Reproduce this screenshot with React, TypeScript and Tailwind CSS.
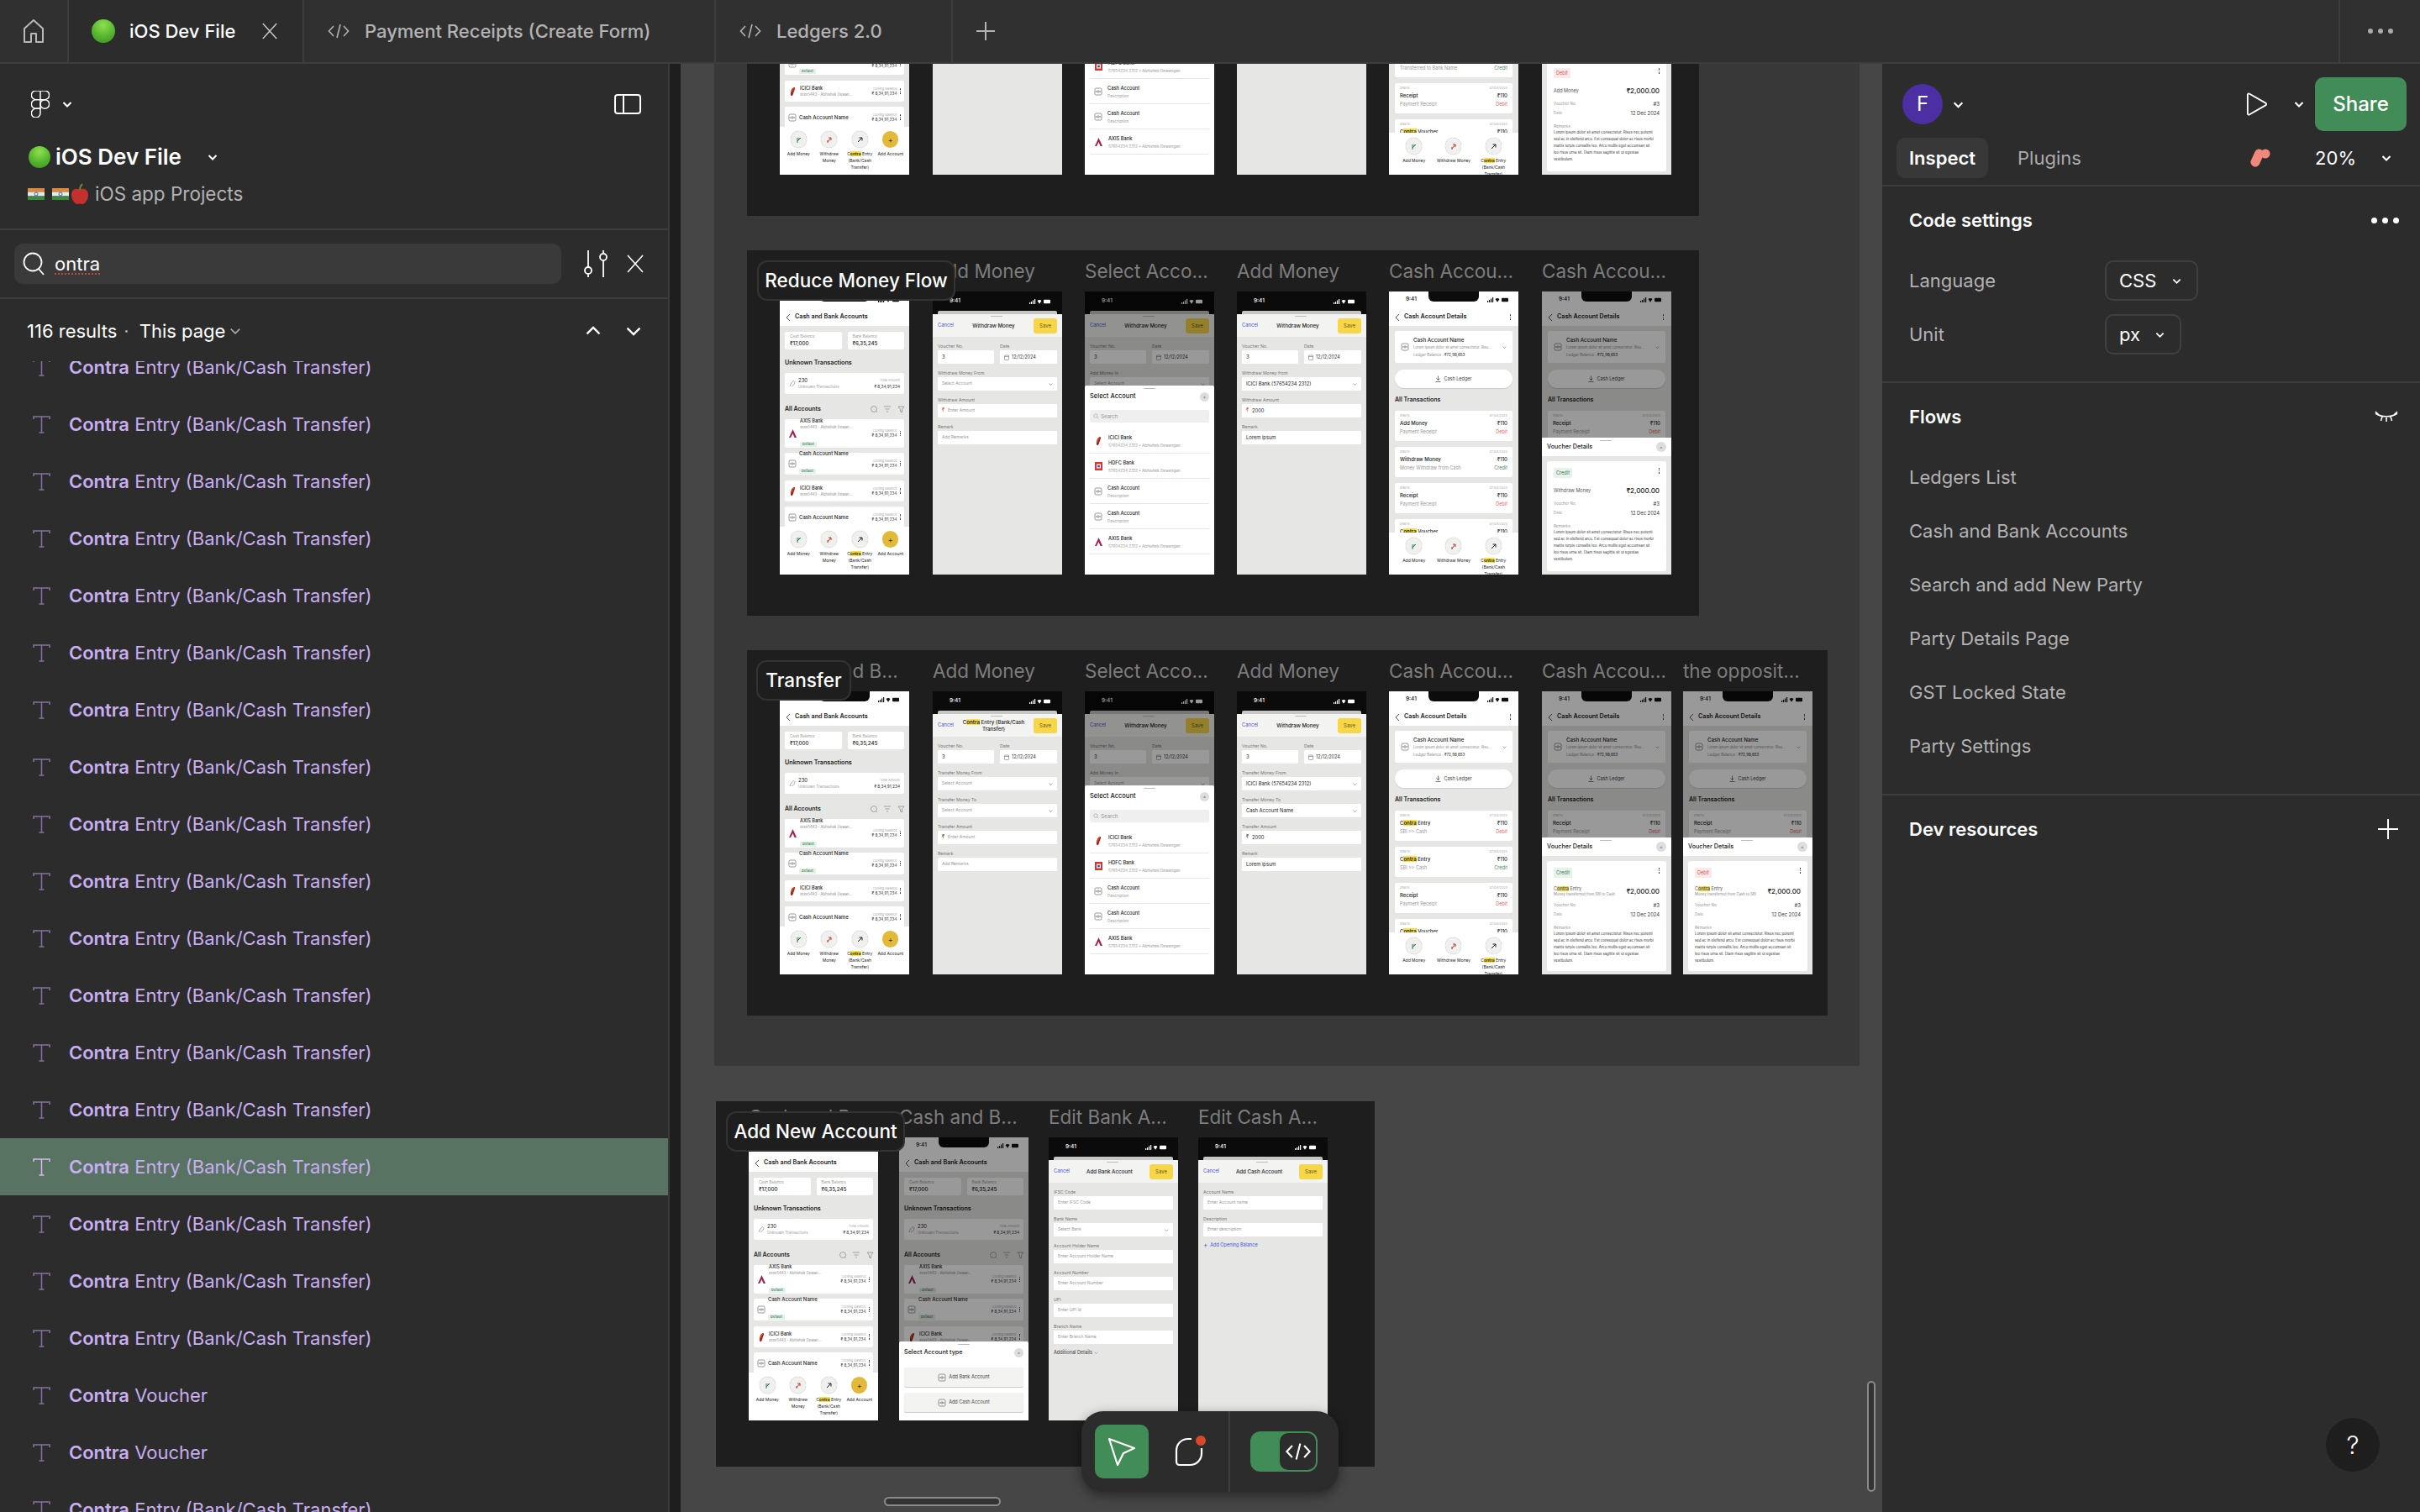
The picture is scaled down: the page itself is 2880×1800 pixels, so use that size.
import React from "react";

const Hi = () => (
  <>
    <span>C</span>
    <span className="bg-[#f9e04b] font-semibold">ontra</span>
  </>
);

const Chev = ({ c = "#fff", s = 12, up = false, w = 2 }: { c?: string; s?: number; up?: boolean; w?: number }) => (
  <svg width={s} height={s} viewBox="0 0 12 12" fill="none" stroke={c} strokeWidth={w} className="shrink-0">
    <path d={up ? "M1.5 8 6 3.5 10.5 8" : "M1.5 4 6 8.5 10.5 4"} />
  </svg>
);

const XIcon = ({ s = 22, c = "#fff" }: { s?: number; c?: string }) => (
  <svg width={s} height={s} viewBox="0 0 22 22" stroke={c} strokeWidth={1.6} fill="none" className="shrink-0">
    <path d="M2 1 20 21M20 1 2 21" />
  </svg>
);

const CodeIcon = ({ c = "#b3b3b3", w = 26, h = 22, sw = 1.6 }: { c?: string; w?: number; h?: number; sw?: number }) => (
  <svg width={w} height={h} viewBox="0 0 26 22" fill="none" stroke={c} strokeWidth={sw} className="shrink-0">
    <path d="M7 5 1.5 11 7 17M19 5l5.5 6-5.5 6M15 3l-4 16" />
  </svg>
);

const GreenDot = ({ className }: { className: string }) => (
  <span className={`inline-block shrink-0 rounded-full bg-[radial-gradient(circle_at_50%_25%,#8ee04e,#55b52f_55%,#3c8f21)] ${className}`} />
);

const Flag = () => (
  <svg width="20" height="16" viewBox="0 0 20 16" className="shrink-0">
    <path d="M0 1h20v4.5H0z" fill="#d98a3d" />
    <path d="M0 5.5h20v5H0z" fill="#e9e9e9" />
    <path d="M0 10.500h20V15H0z" fill="#3d8a45" />
    <circle cx="10" cy="8" r="2" fill="none" stroke="#33468f" strokeWidth="0.8" />
  </svg>
);

/* ---------- miniature phone pieces ---------- */

const Status = ({ light = false }: { light?: boolean }) => {
  const c = light ? "#ffffff" : "#111111";
  return (
    <div className={`flex h-[20px] items-center justify-between pl-[20px] ${light ? "pr-[14px] pt-[3px]" : "pr-[12px]"}`}>
      <span className={`text-[6.500px] font-medium ${light ? "text-white" : "text-[#111]"}`}>9:41</span>
      <svg width="25" height="6" viewBox="0 0 25 6" fill={c}>
        <path d="M0 4h1.200v2H0zM2 3h1.200v3H2zM4 1.500h1.200V6H4zM6 0h1.200v6H6z" />
        <path d="M9.500 2 12 5.800 14.500 2a4 4 0 0 0-5 0z" />
        <rect x="17" y="0.800" width="8" height="4.500" rx="1" />
      </svg>
    </div>
  );
};

const Header = ({ title, menu = false }: { title: string; menu?: boolean }) => (
  <div className="relative h-[41px] shrink-0 bg-white">
    <div className="absolute left-[47px] top-0 h-[12px] w-[60px] rounded-b-[6px] bg-[#0c0c0c]" />
    <Status />
    <div className="flex h-[21px] items-center pl-[7px] pr-[9px]">
      <svg width="6" height="10" viewBox="0 0 6 10" fill="none" stroke="#222" strokeWidth="0.8">
        <path d="M5 1 1 5l4 4" />
      </svg>
      <span className="ml-[5px] flex-1 whitespace-nowrap text-[7.200px] font-semibold text-[#1a1a1a]">{title}</span>
      {menu && <Dots />}
    </div>
  </div>
);

const Dots = () => (
  <span className="flex shrink-0 flex-col gap-[1px]">
    <i className="block h-[1.500px] w-[1.500px] rounded-full bg-[#222]" />
    <i className="block h-[1.500px] w-[1.500px] rounded-full bg-[#222]" />
    <i className="block h-[1.500px] w-[1.500px] rounded-full bg-[#222]" />
  </span>
);

const Logo = ({ kind }: { kind: string }) => {
  if (kind === "axis")
    return (
      <svg width="11" height="12" viewBox="0 0 11 12" className="shrink-0">
        <path d="M5.500 1 10 11H7.500L5.500 6 3 11H1z" fill="#a3214f" />
      </svg>
    );
  if (kind === "icici")
    return (
      <svg width="11" height="12" viewBox="0 0 11 12" className="shrink-0">
        <path d="M7 1C4 2 2.500 6 3 10c.300 1.500 2 1.500 2.500 0L8 2.500C8.300 1.500 7.800.800 7 1z" fill="#a8201a" />
        <path d="M7.500 1.500c-1.500.500-3 3-3.500 6" fill="none" stroke="#e97a26" strokeWidth="0.8" />
      </svg>
    );
  if (kind === "hdfc")
    return (
      <svg width="11" height="12" viewBox="0 0 11 12" className="shrink-0">
        <rect x="1" y="1" width="9" height="10" fill="#e03131" />
        <rect x="3" y="3.500" width="5" height="5" fill="#fff" />
        <rect x="4.300" y="4.800" width="2.500" height="2.500" fill="#1c4fa0" />
      </svg>
    );
  return (
    <svg width="10" height="10" viewBox="0 0 10 10" fill="none" stroke="#555" strokeWidth="0.6" className="shrink-0">
      <rect x="1" y="1" width="8" height="8" rx="1.500" />
      <circle cx="5" cy="5" r="1.200" />
      <path d="M2.800 4v2M7.200 4v2" />
    </svg>
  );
};

const Badge = () => (
  <span className="mt-[1px] inline-block rounded-[1px] bg-[#e4f1e7] px-[3px] text-[4px] font-medium leading-[6px] text-[#39815a]">Default</span>
);

const Account = ({ name, sub, logo, badge, h, mt, bold = false }: { name: string; sub?: string; logo: string; badge?: boolean; h: string; mt: string; bold?: boolean }) => (
  <div className={`flex items-center rounded-[2px] bg-white pl-[4px] pr-[4px] ${h} ${mt}`}>
    <Logo kind={logo} />
    <div className="ml-[3px] min-w-0 flex-1">
      <div className={`whitespace-nowrap font-medium leading-[8px] text-[#222] ${bold ? "text-[5.500px]" : "text-[6px]"}`}>{name}</div>
      {sub && <div className="truncate text-[4.300px] leading-[7px] text-[#8a8a8a]">{sub}</div>}
      {badge && <Badge />}
    </div>
    <div className="mr-[3px] shrink-0 text-right">
      <div className="text-[3.800px] leading-[5px] text-[#aaa]">Closing Balance</div>
      <div className="text-[4.700px] leading-[7px] text-[#333]">₹ 8,34,91,234</div>
    </div>
    <Dots />
  </div>
);

const SmallArrow = ({ c, d }: { c: string; d: string }) => (
  <svg width="9" height="9" viewBox="0 0 9 9" fill="none" stroke={c} strokeWidth="1">
    <path d={d} />
  </svg>
);

const Circle = ({ kind }: { kind: string }) => {
  if (kind === "plus")
    return (
      <span className="flex h-[20px] w-[19px] items-center justify-center rounded-full bg-[#e3b93a] text-[9px] leading-none text-[#333]">+</span>
    );
  return (
    <span className="flex h-[20px] w-[19px] items-center justify-center rounded-full bg-[#f0f0ee] shadow-[0_0_1px_#999]">
      {kind === "add" && <SmallArrow c="#2f7d4f" d="M7 2 3 6M2 3h4v0M3 8V4" />}
      {kind === "wd" && <SmallArrow c="#c0392b" d="M3 7l4-5M4 2h3v3M3 5v3" />}
      {kind === "tr" && <SmallArrow c="#222" d="M2 7l5-5M3.500 2H7v3.500" />}
    </span>
  );
};

const Action = ({ kind, children }: { kind: string; children: React.ReactNode }) => (
  <div className="flex flex-col items-center">
    <Circle kind={kind} />
    <div className="mt-[3px] whitespace-pre-line text-center text-[5px] leading-[8px] text-[#222]">{children}</div>
  </div>
);

const Accounts = ({ dim = false }: { dim?: boolean }) => (
  <div className="relative flex h-full flex-col bg-[#e6e6e4]">
    <Header title="Cash and Bank Accounts" />
    <div className="flex-1 overflow-hidden px-[6px] pt-[7px]">
      <div className="flex gap-[7px]">
        {[
          ["Cash Balance", "₹17,000"],
          ["Bank Balance", "₹6,35,245"],
        ].map(([a, b]) => (
          <div key={a} className="h-[21px] flex-1 rounded-[2px] bg-white px-[6px] pt-[3px]">
            <div className="text-[4.600px] leading-[6px] text-[#999]">{a}</div>
            <div className="text-[6.200px] font-medium leading-[9px] text-[#222]">{b}</div>
          </div>
        ))}
      </div>
      <div className="mt-[12px] text-[7.200px] font-semibold leading-[8px] text-[#222]">Unknown Transactions</div>
      <div className="mt-[8px] flex h-[25px] items-center rounded-[2px] bg-white px-[5px]">
        <svg width="8" height="9" viewBox="0 0 8 9" fill="none" stroke="#777" strokeWidth="0.6">
          <path d="M6 1C3 3 2 5 1 8M7 2c0 3-2 5-4 6" />
        </svg>
        <div className="ml-[3px] flex-1">
          <div className="text-[6px] leading-[8px] text-[#222]">230</div>
          <div className="text-[4.500px] leading-[7px] text-[#999]">Unknown Transactions</div>
        </div>
        <div className="text-right">
          <div className="text-[3.800px] leading-[6px] text-[#aaa]">Total Amount</div>
          <div className="text-[4.800px] leading-[8px] text-[#333]">₹ 8,34,91,234</div>
        </div>
      </div>
      <div className="mt-[13px] flex h-[10px] items-center">
        <span className="flex-1 text-[7px] font-semibold text-[#222]">All Accounts</span>
        <svg width="48" height="10" viewBox="0 0 48 10" fill="none" stroke="#777" strokeWidth="0.6" className="mr-[-3px]">
          <circle cx="9" cy="5" r="3.500" />
          <path d="M11.500 7.500 13 9M21 2h8M22.500 5h5M24 8h2M38 2h7l-2.500 3.500V9L40.500 8V5.500z" />
        </svg>
      </div>
      <Account name="AXIS Bank" sub="xxxx5443 - Abhishek Dewan..." logo="axis" badge bold h="h-[34px]" mt="mt-[7px]" />
      <Account name="Cash Account Name" logo="cash" badge h="h-[26px]" mt="mt-[6px]" />
      <Account name="ICICI Bank" sub="xxxx5443 - Abhishek Dewan..." logo="icici" bold h="h-[25px]" mt="mt-[7px]" />
      <Account name="Cash Account Name" logo="cash" h="h-[25px]" mt="mt-[6px]" />
    </div>
    <div className="grid h-[57px] shrink-0 grid-cols-4 bg-white px-[4px] pt-[5px]">
      <Action kind="add">Add Money</Action>
      <Action kind="wd">{"Withdraw\nMoney"}</Action>
      <Action kind="tr">
        <Hi /> Entry{"\n(Bank/Cash\nTransfer)"}
      </Action>
      <Action kind="plus">Add Account</Action>
    </div>
    {dim && <div className="absolute inset-0 bg-black/40" />}
  </div>
);

type Field = { label: string; value: string; filled?: boolean; select?: boolean; icon?: string };

const Input = ({ f }: { f: Field }) => (
  <div className="mb-[6px]">
    <div className="h-[10px] whitespace-nowrap text-[5.200px] leading-[10px] text-[#777]">{f.label}</div>
    <div className="flex h-[16px] items-center rounded-[1.500px] bg-white px-[5px]">
      {f.icon && <span className="mr-[4px] text-[5.500px] leading-none" style={{ color: f.icon }}>₹</span>}
      <span className={`flex-1 whitespace-nowrap ${f.filled ? "text-[5.800px] text-[#222]" : "text-[5px] text-[#999]"}`}>{f.value}</span>
      {f.select && <Chev c="#555" s={5} w={1.200} />}
    </div>
  </div>
);

const Form = ({
  title,
  voucher = true,
  fields,
  footer,
  dim = false,
}: {
  title: React.ReactNode;
  voucher?: boolean;
  fields: Field[];
  footer?: React.ReactNode;
  dim?: boolean;
}) => (
  <div className="relative flex h-full flex-col bg-[#e6e6e4]">
    <div className="relative h-[27px] shrink-0 bg-[#0b0b0b]">
      <Status light />
      <div className="absolute bottom-0 left-[6px] right-[6px] h-[4px] rounded-t-[2px] bg-[#c6c6c4]" />
    </div>
    <div className="relative flex h-[27px] shrink-0 items-center justify-between rounded-t-[2px] bg-[#f3f3f1] pl-[6px] pr-[6px]">
      <div className="absolute left-[69px] top-[2px] h-[1px] w-[14px] rounded bg-[#bbb]" />
      <span className="text-[5.800px] text-[#4a55d4]">Cancel</span>
      <span className="w-[76px] text-center text-[6.200px] font-medium leading-[8px] text-[#222]">{title}</span>
      <span className="flex h-[18px] w-[28px] items-center justify-center rounded-[3px] bg-[#f7d64a] text-[6px] text-[#6b5a10]">Save</span>
    </div>
    <div className="flex-1 overflow-hidden px-[6px] pt-[6px]">
      {voucher && (
        <div className="flex gap-[7px]">
          <div className="w-[67px]">
            <Input f={{ label: "Voucher No.", value: "3", filled: true }} />
          </div>
          <div className="flex-1">
            <div className="mb-[6px]">
              <div className="h-[10px] text-[5.200px] leading-[10px] text-[#777]">Date</div>
              <div className="flex h-[16px] items-center gap-[3px] rounded-[1.500px] bg-white px-[5px] text-[5.500px] text-[#333]">
                <svg width="6" height="7" viewBox="0 0 6 7" fill="none" stroke="#555" strokeWidth="0.5">
                  <rect x="0.500" y="1" width="5" height="5.500" rx="0.800" />
                  <path d="M0.500 2.500h5" />
                </svg>
                12/12/2024
              </div>
            </div>
          </div>
        </div>
      )}
      {fields.map((f) => (
        <Input key={f.label} f={f} />
      ))}
      {footer}
    </div>
    {dim && <div className="absolute inset-0 bg-black/40" />}
  </div>
);

const Sub = "57654234 2312 • Abhishek Dewangan";

const SelectSheet = () => (
  <div className="absolute inset-x-0 bottom-0 top-[112px] rounded-t-[2px] bg-white px-[6px]">
    <div className="mx-auto mt-[3px] h-[1px] w-[14px] rounded bg-[#bbb]" />
    <div className="mt-[4px] flex h-[10px] items-center justify-between">
      <span className="text-[7.500px] font-medium text-[#222]">Select Account</span>
      <span className="flex h-[11px] w-[11px] items-center justify-center rounded-full bg-[#ddd] text-[5px] leading-none text-[#666]">×</span>
    </div>
    <div className="mt-[11px] flex h-[15px] items-center gap-[2px] rounded-[2px] bg-[#efefef] px-[4px] text-[6.200px] text-[#999]">
      <svg width="7" height="7" viewBox="0 0 7 7" fill="none" stroke="#888" strokeWidth="0.5">
        <circle cx="3" cy="3" r="2.200" />
        <path d="M4.700 4.700 6.500 6.500" />
      </svg>
      Search
    </div>
    <div className="mt-[7px]">
      {[
        ["ICICI Bank", Sub, "icici"],
        ["HDFC Bank", Sub, "hdfc"],
        ["Cash Account", "Description", "cash"],
        ["Cash Account", "Description", "cash"],
        ["AXIS Bank", Sub, "axis"],
      ].map(([n, s, l], i) => (
        <div key={i} className="flex h-[30px] items-center gap-[6px] border-b border-[#e6e6e6] pl-[5px]">
          <Logo kind={l} />
          <div>
            <div className="text-[5.700px] font-medium leading-[10px] text-[#222]">{n}</div>
            <div className="whitespace-nowrap text-[4.700px] leading-[8px] text-[#999]">{s}</div>
          </div>
        </div>
      ))}
    </div>
  </div>
);

const TypeSheet = () => (
  <div className="absolute inset-x-0 bottom-0 top-[243px] rounded-t-[2px] bg-white px-[6px]">
    <div className="mx-auto mt-[3px] h-[1px] w-[14px] rounded bg-[#bbb]" />
    <div className="mt-[4px] flex h-[11px] items-center justify-between">
      <span className="text-[7.200px] font-medium text-[#222]">Select Account type</span>
      <span className="flex h-[11px] w-[11px] items-center justify-center rounded-full bg-[#ddd] text-[5px] leading-none text-[#666]">×</span>
    </div>
    {["Add Bank Account", "Add Cash Account"].map((t, i) => (
      <div key={t} className={`flex h-[23px] items-center justify-center gap-[3px] rounded-[2px] bg-[#f3f3f1] shadow-[0_1px_1px_#ccc] text-[5.500px] text-[#444] ${i === 0 ? "mt-[12px]" : "mt-[7px]"}`}>
        <Logo kind="cash" />
        {t}
      </div>
    ))}
  </div>
);

type Tx = { title: React.ReactNode; amt: string; sub: React.ReactNode; tag: string };

const Details = ({ tx, dim = false }: { tx: Tx[]; dim?: boolean }) => (
  <div className="relative flex h-full flex-col bg-[#e6e6e4]">
    <Header title="Cash Account Details" menu />
    <div className="flex-1 overflow-hidden px-[7px] pt-[6px]">
      <div className="flex h-[38px] items-center rounded-[2px] bg-white pl-[7px] pr-[7px]">
        <Logo kind="cash" />
        <div className="ml-[5px] min-w-0 flex-1">
          <div className="text-[6.200px] font-medium leading-[9px] text-[#222]">Cash Account Name</div>
          <div className="truncate text-[4.200px] leading-[9px] text-[#888]">Lorem ipsum dolor sit amet consectetur. Risu...</div>
          <div className="text-[4.500px] leading-[9px] text-[#888]">
            Ledger Balance : <span className="font-medium text-[#444]">₹72,98,653</span>
          </div>
        </div>
        <Chev c="#333" s={5} w={1} />
      </div>
      <div className="mt-[8px] flex h-[22px] items-center justify-center gap-[3px] rounded-full bg-white text-[5.500px] text-[#444] shadow-[0_1px_1px_#ccc]">
        <svg width="7" height="8" viewBox="0 0 7 8" fill="none" stroke="#222" strokeWidth="0.6">
          <path d="M3.500 0.500v5M1.500 3.500l2 2 2-2M0.500 7.500h6" />
        </svg>
        Cash Ledger
      </div>
      <div className="mt-[10px] text-[7px] font-semibold leading-[8px] text-[#222]">All Transactions</div>
      {tx.map((t, i) => (
        <div key={i} className={`h-[36px] rounded-[2px] bg-white px-[6px] pt-[3px] ${i === 0 ? "mt-[9px]" : "mt-[7px]"}`}>
          <div className="flex justify-between text-[3.800px] leading-[6px] text-[#aaa]">
            <span>#9876</span>
            <span>07/04/2024</span>
          </div>
          <div className="flex justify-between text-[6px] font-medium leading-[11px] text-[#222]">
            <span>{t.title}</span>
            <span>{t.amt}</span>
          </div>
          <div className="flex justify-between text-[5.500px] leading-[10px] text-[#999]">
            <span>{t.sub}</span>
            <span className={t.tag === "Debit" ? "text-[#e06a6a]" : "text-[#4f8a68]"}>{t.tag}</span>
          </div>
        </div>
      ))}
    </div>
    <div className="grid h-[50px] shrink-0 grid-cols-3 bg-white px-[6px] pt-[6px]">
      <Action kind="add">Add Money</Action>
      <Action kind="wd">Withdraw Money</Action>
      <Action kind="tr">
        <Hi /> Entry{"\n(Bank/Cash Transfer)"}
      </Action>
    </div>
    {dim && <div className="absolute inset-0 bg-black/40" />}
  </div>
);

const lorem = "Lorem ipsum dolor sit amet consectetur. Risus nec potenti\nsed ac in eleifend arcu. Est consequat dolor ac risus morbi\nmattis turpis convallis leo. Arcu mollis eget accumsan sit\nleo risus urna sit. Diam risus sagittis sit ut egestas\nvestibulum.";

const VoucherSheet = ({ tag, title, note }: { tag: string; title: React.ReactNode; note?: string }) => (
  <div className="absolute inset-x-0 bottom-0 top-[174px] flex flex-col bg-[#e6e6e4]">
    <div className="relative flex h-[22px] shrink-0 items-center justify-between rounded-t-[2px] bg-white px-[6px]">
      <div className="absolute left-[69px] top-[3px] h-[1px] w-[14px] rounded bg-[#bbb]" />
      <span className="text-[7.200px] font-medium text-[#222]">Voucher Details</span>
      <span className="flex h-[12px] w-[12px] items-center justify-center rounded-full bg-[#ddd] text-[5px] leading-none text-[#666]">×</span>
    </div>
    <div className="mx-[6px] mt-[6px] h-[131px] rounded-[2px] bg-white px-[8px] pt-[8px]">
      <div className="flex items-start justify-between">
        <span className={`rounded-[1px] px-[3px] text-[5.600px] leading-[12px] ${tag === "Debit" ? "bg-[#fbe9e9] text-[#d9534f]" : "bg-[#e6f2ea] text-[#3f7d5c]"}`}>{tag}</span>
        <Dots />
      </div>
      <div className="mt-[9px] flex items-center justify-between">
        <div>
          <div className="text-[5.500px] leading-[8px] text-[#555]">{title}</div>
          {note && <div className="whitespace-nowrap text-[4.300px] leading-[6px] text-[#888]">{note}</div>}
        </div>
        <span className="text-[8px] font-medium text-[#222]">₹2,000.00</span>
      </div>
      <div className="mt-[4px] flex items-center justify-between text-[4.600px] leading-[11px] text-[#999]">
        <span>Voucher No.</span>
        <span className="text-[6px] text-[#333]">#3</span>
      </div>
      <div className="flex items-center justify-between text-[4.600px] leading-[11px] text-[#999]">
        <span>Date</span>
        <span className="text-[5.800px] text-[#333]">12 Dec 2024</span>
      </div>
      <div className="mt-[6px] text-[4.800px] leading-[8px] text-[#999]">Remarks</div>
      <div className="whitespace-pre-line text-[4.300px] leading-[8px] text-[#333]">{lorem}</div>
    </div>
  </div>
);

/* ---------- data for the canvas ---------- */

const wdEmpty: Field[] = [
  { label: "Withdraw Money From", value: "Select Account", select: true },
  { label: "Withdraw Amount", value: "Enter Amount", icon: "#c0392b" },
  { label: "Remark", value: "Add Remarks" },
];
const wdFull: Field[] = [
  { label: "Withdraw Money from", value: "ICICI Bank (57654234 2312)", select: true, filled: true },
  { label: "Withdraw Amount", value: "2000", icon: "#c0392b", filled: true },
  { label: "Remark", value: "Lorem ipsum", filled: true },
];
const trEmpty: Field[] = [
  { label: "Transfer Money From", value: "Select Account", select: true },
  { label: "Transfer Money To", value: "Select Account", select: true },
  { label: "Transfer Amount", value: "Enter Amount", icon: "#333" },
  { label: "Remark", value: "Add Remarks" },
];
const trFull: Field[] = [
  { label: "Transfer Money From", value: "ICICI Bank (57654234 2312)", select: true, filled: true },
  { label: "Transfer Money To", value: "Cash Account Name", select: true, filled: true },
  { label: "Transfer Amount", value: "2000", icon: "#333", filled: true },
  { label: "Remark", value: "Lorem ipsum", filled: true },
];
const addIn: Field[] = [{ label: "Add Money In", value: "Select Account", select: true }];

const bankFields: Field[] = [
  { label: "IFSC Code", value: "Enter IFSC Code" },
  { label: "Bank Name", value: "Select Bank", select: true },
  { label: "Account Holder Name", value: "Enter Account Holder Name" },
  { label: "Account Number", value: "Enter Account Number" },
  { label: "UPI", value: "Enter UPI Id" },
  { label: "Branch Name", value: "Enter Branch Name" },
];
const cashFields: Field[] = [
  { label: "Account Name", value: "Enter Account name" },
  { label: "Description", value: "Enter description" },
];

const receipt: Tx = { title: "Receipt", amt: "₹110", sub: "Payment Receipt", tag: "Debit" };
const voucherTx: Tx = { title: <><Hi /> Voucher</>, amt: "₹110", sub: "Money", tag: "Debit" };
const txReduce: Tx[] = [
  { title: "Add Money", amt: "₹110", sub: "Payment Receipt", tag: "Debit" },
  { title: "Withdraw Money", amt: "₹110", sub: "Money Withdraw from Cash", tag: "Credit" },
  receipt,
  voucherTx,
];
const sbi = <>SBI &gt;&gt; Cash</>;
const txTransfer: Tx[] = [
  { title: <><Hi /> Entry</>, amt: "₹110", sub: sbi, tag: "Debit" },
  { title: <><Hi /> Entry</>, amt: "₹110", sub: sbi, tag: "Credit" },
  receipt,
  voucherTx,
];
const txTop: Tx[] = [
  { title: "Add Money", amt: "₹110", sub: "Payment Receipt", tag: "Debit" },
  { title: <><Hi /> Entry</>, amt: "₹110", sub: "Transferred to Bank Name", tag: "Credit" },
  receipt,
  voucherTx,
];
const allReceipts: Tx[] = [receipt, receipt, receipt, voucherTx];

const wdTitle = "Withdraw Money";
const contraTitle = (
  <>
    <Hi /> Entry (Bank/Cash Transfer)
  </>
);

const xs = [928, 1110, 1291, 1472, 1653, 1835];

type Item = { x: number; title: string; el: React.ReactNode };
type Row = { y: number; items: Item[] };

const rows: Row[] = [
  {
    y: -129,
    items: [
      { x: xs[0], title: "", el: <Accounts /> },
      { x: xs[1], title: "", el: <Form title="Add Money" fields={[]} /> },
      { x: xs[2], title: "", el: <div className="relative h-full bg-white"><SelectSheet /></div> },
      { x: xs[3], title: "", el: <Form title="Add Money" fields={[]} /> },
      { x: xs[4], title: "", el: <Details tx={txTop} /> },
      { x: xs[5], title: "", el: <div className="relative h-full bg-[#e6e6e4]"><VoucherSheet tag="Debit" title="Add Money" /></div> },
    ],
  },
  {
    y: 347,
    items: [
      { x: xs[0], title: "Cash and B...", el: <Accounts /> },
      { x: xs[1], title: "Add Money", el: <Form title={wdTitle} fields={wdEmpty} /> },
      {
        x: xs[2],
        title: "Select Acco...",
        el: (
          <div className="relative h-full">
            <Form title={wdTitle} fields={addIn} dim />
            <SelectSheet />
          </div>
        ),
      },
      { x: xs[3], title: "Add Money", el: <Form title={wdTitle} fields={wdFull} /> },
      { x: xs[4], title: "Cash Accou...", el: <Details tx={txReduce} /> },
      {
        x: xs[5],
        title: "Cash Accou...",
        el: (
          <div className="relative h-full">
            <Details tx={allReceipts} dim />
            <VoucherSheet tag="Credit" title="Withdraw Money" />
          </div>
        ),
      },
    ],
  },
  {
    y: 823,
    items: [
      { x: xs[0], title: "Cash and B...", el: <Accounts /> },
      { x: xs[1], title: "Add Money", el: <Form title={contraTitle} fields={trEmpty} /> },
      {
        x: xs[2],
        title: "Select Acco...",
        el: (
          <div className="relative h-full">
            <Form title={wdTitle} fields={addIn} dim />
            <SelectSheet />
          </div>
        ),
      },
      { x: xs[3], title: "Add Money", el: <Form title={wdTitle} fields={trFull} /> },
      { x: xs[4], title: "Cash Accou...", el: <Details tx={txTransfer} /> },
      {
        x: xs[5],
        title: "Cash Accou...",
        el: (
          <div className="relative h-full">
            <Details tx={allReceipts} dim />
            <VoucherSheet tag="Credit" title={<><Hi /> Entry</>} note="Money transferred from SBI to Cash" />
          </div>
        ),
      },
      {
        x: 2003,
        title: "the opposit...",
        el: (
          <div className="relative h-full">
            <Details tx={allReceipts} dim />
            <VoucherSheet tag="Debit" title={<><Hi /> Entry</>} note="Money transferred from Cash to SBI" />
          </div>
        ),
      },
    ],
  },
  {
    y: 1354,
    items: [
      { x: 891, title: "Cash and B...", el: <Accounts /> },
      {
        x: 1070,
        title: "Cash and B...",
        el: (
          <div className="relative h-full">
            <Accounts dim />
            <TypeSheet />
          </div>
        ),
      },
      {
        x: 1248,
        title: "Edit Bank A...",
        el: (
          <Form
            title="Add Bank Account"
            voucher={false}
            fields={bankFields}
            footer={
              <div className="mt-[1px] flex items-center gap-[2px] text-[5.500px] font-medium text-[#555]">
                Additional Details <Chev c="#555" s={5} w={1} />
              </div>
            }
          />
        ),
      },
      {
        x: 1426,
        title: "Edit Cash A...",
        el: (
          <Form
            title="Add Cash Account"
            voucher={false}
            fields={cashFields}
            footer={
              <div className="mt-[3px] flex items-center gap-[3px] text-[5.500px] text-[#4a55d4]">
                <span className="text-[8px] leading-none">+</span> Add Opening Balance
              </div>
            }
          />
        ),
      },
    ],
  },
];

/* canvas origin in page coordinates */
const OX = 810;
const OY = 76;

const tagCls = "absolute flex h-[48px] items-center justify-center rounded-[12px] border-2 border-[#333] bg-[#1e1e1e] text-[22.500px] font-medium text-white";

const Canvas = () => (
  <div className="relative flex-1 overflow-hidden bg-[#464646]">
    <div className="absolute left-[40px] top-0 h-[1193px] w-[1363px] bg-[#383838]" />
    <div className="absolute left-[79px] top-0 h-[181px] w-[1133px] bg-[#1e1e1e]" />
    <div className="absolute left-[79px] top-[222px] h-[435px] w-[1133px] bg-[#1e1e1e]" />
    <div className="absolute left-[79px] top-[698px] h-[435px] w-[1286px] bg-[#1e1e1e]" />
    <div className="absolute left-[42px] top-[1235px] h-[435px] w-[784px] bg-[#1e1e1e]" />
    {rows.map((r) =>
      r.items.map((it, i) => (
        <React.Fragment key={`${r.y}-${i}`}>
          {it.title && (
            <div
              className="absolute whitespace-nowrap text-[22.500px] leading-[28px] text-[#7d7d7d]"
              style={{ left: it.x - OX, top: r.y - OY - 38 }}
            >
              {it.title}
            </div>
          )}
          <div
            className="absolute h-[337px] w-[154px] overflow-hidden bg-white"
            style={{ left: it.x - OX, top: r.y - OY }}
          >
            {it.el}
          </div>
        </React.Fragment>
      ))
    )}
    <div className={`${tagCls} left-[91px] top-[234px] w-[236px]`}>Reduce Money Flow</div>
    <div className={`${tagCls} left-[90px] top-[710px] w-[113px]`}>Transfer</div>
    <div className={`${tagCls} left-[54px] top-[1247px] w-[213px]`}>Add New Account</div>

    {/* floating toolbar */}
    <div className="absolute left-[477px] top-[1604px] flex h-[96px] w-[306px] items-center rounded-[26px] bg-[#2c2c2c] pl-[16px] shadow-[0_4px_14px_rgba(0,0,0,0.45)]">
      <div className="flex h-[64px] w-[64px] items-center justify-center rounded-[10px] bg-[#428d57]">
        <svg width="36" height="36" viewBox="0 0 36 36" fill="none" stroke="#fff" strokeWidth="2.200" strokeLinejoin="round">
          <path d="M3 3 33 14 20 20 13 34Z" />
        </svg>
      </div>
      <div className="relative ml-[31px] h-[36px] w-[34px]">
        <svg width="34" height="36" viewBox="0 0 34 36" fill="none" stroke="#fff" strokeWidth="2.200">
          <path d="M20 3H16C8 3 2 9 2 17V30C2 32 3 34 6 34H18C26 34 32 28 32 20V14" />
        </svg>
        <span className="absolute right-[-3px] top-[-1px] h-[12px] w-[12px] rounded-full bg-[#d8482a]" />
      </div>
      <div className="ml-[30px] h-full w-[2px] bg-[#3f3f3f]" />
      <div className="ml-[24px] flex h-[48px] w-[80px] items-center justify-end rounded-[12px] bg-[#428d57] pr-[2px]">
        <div className="flex h-[44px] w-[43px] items-center justify-center rounded-[10px] bg-[#2c2c2c]">
          <CodeIcon c="#fff" w={32} h={26} sw={1.800} />
        </div>
      </div>
    </div>

    {/* canvas scrollbars */}
    <div className="absolute left-[242px] top-[1706px] h-[11px] w-[139px] rounded-full border-2 border-[#8a8a8a] bg-[#333]" />
    <div className="absolute left-[1412px] top-[1568px] h-[132px] w-[10px] rounded-full border-2 border-[#8a8a8a] bg-[#333]" />
  </div>
);

/* ---------- left panel ---------- */

const TIcon = ({ c }: { c: string }) => (
  <svg width="21" height="21" viewBox="0 0 21 21" fill="none" stroke={c} strokeWidth="1.500" className="shrink-0">
    <path d="M1 4V1h19v3M10.500 1v19M7.500 20h6" />
  </svg>
);

const resultRows = [
  ...Array.from({ length: 18 }, () => "Entry (Bank/Cash Transfer)"),
  "Voucher",
  "Voucher",
  "Entry (Bank/Cash Transfer)",
];

const LeftPanel = () => (
  <div className="flex w-[797px] shrink-0 flex-col border-r-2 border-[#3a3a3a] bg-[#2c2c2c]">
    <div className="flex h-[198px] shrink-0 flex-col border-b-2 border-[#3d3d3d] px-[32px]">
      <div className="flex h-[94px] items-center pl-[5px] pt-[2px]">
        <svg width="22" height="32" viewBox="4 2 16 24" fill="none" stroke="#fff" strokeWidth="1.100">
          <path d="M12 2H8a4 4 0 0 0 0 8h4zM12 2h4a4 4 0 0 1 0 8h-4zM12 10H8a4 4 0 0 0 0 8h4z" />
          <circle cx="16" cy="14" r="4" />
          <path d="M8 18h4v4a4 4 0 1 1-4-4z" />
        </svg>
        <span className="ml-[15px]">
          <Chev s={12} />
        </span>
        <svg width="32" height="24" viewBox="0 0 32 24" fill="none" stroke="#fff" strokeWidth="2" className="ml-auto">
          <rect x="1" y="1" width="30" height="22" rx="3" />
          <path d="M11 1v22" />
        </svg>
      </div>
      <div className="flex h-[34px] items-center">
        <GreenDot className="ml-[2px] h-[26px] w-[26px]" />
        <span className="ml-[6px] text-[26px] font-semibold leading-none text-white">iOS Dev File</span>
        <span className="ml-[31px]">
          <Chev s={12} />
        </span>
      </div>
      <div className="mt-[14px] flex h-[26px] items-center text-[22.500px] text-[#b3b3b3]">
        <span className="ml-[1px]"><Flag /></span>
        <span className="ml-[9px]"><Flag /></span>
        <svg width="22" height="26" viewBox="0 0 22 26" className="ml-[2px] shrink-0">
          <path d="M11 8C7 5 1 7 1 14c0 6 4 11 7 11 1.500 0 2-.800 3-.800s1.500.800 3 .800c3 0 7-5 7-11 0-7-6-9-10-6z" fill="#c4302b" />
          <path d="M11 8c0-3 1-5 3-7" fill="none" stroke="#5a8f3a" strokeWidth="2" />
        </svg>
        <span className="ml-[7px]">iOS app Projects</span>
      </div>
    </div>
    <div className="flex h-[82px] shrink-0 items-center border-b-2 border-[#3d3d3d] pl-[17px]">
      <div className="flex h-[48px] w-[651px] items-center rounded-[10px] bg-[#3a3a3a] pl-[10px]">
        <svg width="26" height="28" viewBox="0 0 26 28" fill="none" stroke="#fff" strokeWidth="1.800">
          <ellipse cx="12" cy="12" rx="10.500" ry="10.500" />
          <path d="M19 20l6 7" />
        </svg>
        <span className="ml-[12px] text-[22px] leading-[26px] text-white underline decoration-[#c8453a] decoration-dotted decoration-2 underline-offset-[3px]">ontra</span>
      </div>
      <svg width="32" height="34" viewBox="0 0 32 34" fill="none" stroke="#fff" strokeWidth="1.800" className="ml-[25px]">
        <path d="M7 1v20M7 29v4M25 1v3M25 13v20" />
        <circle cx="7" cy="25" r="4" />
        <circle cx="25" cy="9" r="4" />
      </svg>
      <span className="ml-[20px]">
        <XIcon />
      </span>
    </div>
    <div className="flex h-[74px] shrink-0 items-center pl-[32px] pr-[31px] pt-[2px] text-[22px] text-white">
      <span>116 results</span>
      <span className="ml-[8px] text-[#aaa]">·</span>
      <span className="ml-[12px]">This page</span>
      <span className="ml-[5px]"><Chev s={14} c="#aaa" w={1.400} /></span>
      <span className="ml-auto"><Chev s={20} up w={1.400} /></span>
      <span className="ml-[28px]"><Chev s={20} w={1.400} /></span>
    </div>
    <div className="min-h-0 flex-1 overflow-hidden">
      <div className="mt-[-27px]">
        {resultRows.map((t, i) => (
          <div key={i} className={`flex h-[68px] items-center pl-[39px] text-[22px] text-[#c8aef2] ${i === 14 ? "bg-[#587361]" : ""}`}>
            <TIcon c={i === 14 ? "#d2b9f5" : "#85709f"} />
            <span className="ml-[22px] whitespace-nowrap">
              <b className="font-semibold">Contra</b> {t}
            </span>
          </div>
        ))}
      </div>
    </div>
  </div>
);

/* ---------- right panel ---------- */

const SmallSelect = ({ label, w }: { label: string; w: string }) => (
  <div className={`flex h-[48px] items-center justify-between rounded-[10px] border-2 border-[#404040] pl-[15px] pr-[18px] text-[22px] text-white ${w}`}>
    {label}
    <Chev s={11} />
  </div>
);

const RightPanel = () => (
  <div className="flex w-[640px] shrink-0 flex-col bg-[#2c2c2c]">
    <div className="flex h-[146px] shrink-0 flex-col border-b-2 border-[#3d3d3d]">
      <div className="flex h-[88px] shrink-0 items-center pl-[24px] pr-[16px] pt-[8px]">
        <span className="flex h-[48px] w-[48px] items-center justify-center rounded-full bg-[#4b2fa3] text-[24px] text-white">F</span>
        <span className="ml-[12px]"><Chev s={13} /></span>
        <svg width="26" height="28" viewBox="0 0 28 30" fill="none" stroke="#fff" strokeWidth="2" strokeLinejoin="round" className="ml-auto mr-[8px]">
          <path d="M2 3C2 1.500 3.500 1 4.500 1.800L25 13.500c1.300.800 1.300 2.200 0 3L4.500 28.200C3.500 29 2 28.500 2 27z" />
        </svg>
        <span className="ml-[23px]"><Chev s={12} /></span>
        <div className="ml-[13px] flex h-[64px] w-[109px] items-center justify-center rounded-[10px] bg-[#428d57] text-[24px] font-medium text-white">Share</div>
      </div>
      <div className="flex flex-1 items-start pl-[17px] pr-[34px]">
        <div className="flex h-[48px] w-[109px] items-center justify-center rounded-[10px] bg-[#383838] text-[22px] font-semibold text-white">Inspect</div>
        <span className="ml-[35px] flex h-[48px] items-center text-[22px] text-[#ababab]">Plugins</span>
        <svg width="28" height="22" viewBox="0 0 28 22" className="ml-auto mr-[3px] mt-[13px]">
          <path d="M8 16 12.500 6" stroke="#f0897c" strokeWidth="11" strokeLinecap="round" fill="none" />
          <circle cx="20" cy="6" r="5.500" fill="#f0897c" />
        </svg>
        <span className="ml-[48px] flex h-[48px] items-center text-[22px] text-white">20%</span>
        <span className="ml-[30px] mt-[18px]"><Chev s={12} /></span>
      </div>
    </div>
    <div className="flex h-[234px] shrink-0 flex-col border-b-2 border-[#3d3d3d] pl-[32px] pr-[25px]">
      <div className="flex h-[80px] shrink-0 items-center justify-between">
        <span className="text-[22px] font-semibold text-white">Code settings</span>
        <span className="flex gap-[6px]">
          <i className="h-[7px] w-[7px] rounded-full bg-white" />
          <i className="h-[7px] w-[7px] rounded-full bg-white" />
          <i className="h-[7px] w-[7px] rounded-full bg-white" />
        </span>
      </div>
      <div className="mt-[8px] flex h-[48px] items-center text-[22px] text-[#b3b3b3]">
        <span className="w-[233px]">Language</span>
        <SmallSelect label="CSS" w="w-[111px]" />
      </div>
      <div className="mt-[16px] flex h-[48px] items-center text-[22px] text-[#b3b3b3]">
        <span className="w-[233px]">Unit</span>
        <SmallSelect label="px" w="w-[91px]" />
      </div>
    </div>
    <div className="flex h-[491px] shrink-0 flex-col border-b-2 border-[#3d3d3d] pl-[32px] pr-[26px]">
      <div className="flex h-[80px] shrink-0 items-center justify-between">
        <span className="text-[22px] font-semibold text-white">Flows</span>
        <svg width="28" height="14" viewBox="0 0 28 14" fill="none" stroke="#fff" strokeWidth="1.600">
          <path d="M1 3c7 5 19 5 26 0M1 1l4 4M27 1l-4 4M9 7l-1.500 5M19 7l1.500 5M14 8v5" />
        </svg>
      </div>
      {["Ledgers List", "Cash and Bank Accounts", "Search and add New Party", "Party Details Page", "GST Locked State", "Party Settings"].map((t) => (
        <div key={t} className="flex h-[64px] shrink-0 items-center text-[22px] text-[#b3b3b3]">{t}</div>
      ))}
    </div>
    <div className="flex h-[80px] shrink-0 items-center justify-between pl-[32px] pr-[26px]">
      <span className="text-[22px] font-semibold text-white">Dev resources</span>
      <svg width="24" height="24" viewBox="0 0 24 24" stroke="#fff" strokeWidth="2">
        <path d="M12 0v24M0 12h24" />
      </svg>
    </div>
    <div className="relative flex-1">
      <div className="absolute bottom-[48px] right-[48px] flex h-[64px] w-[64px] items-center justify-center rounded-full bg-[#1e1e1e] text-[30px] font-light text-white">?</div>
    </div>
  </div>
);

/* ---------- top bar ---------- */

const TopBar = () => (
  <div className="flex h-[76px] shrink-0 border-b-2 border-[#3d3d3d] bg-[#303030] text-[22px]">
    <div className="flex w-[82px] items-center justify-center border-r-2 border-[#3d3d3d]">
      <svg width="26" height="28" viewBox="0 0 26 28" fill="none" stroke="#b8b8b8" strokeWidth="2" strokeLinejoin="round">
        <path d="M2 11 13 1l11 10v16h-8V17h-6v10H2z" />
      </svg>
    </div>
    <div className="flex w-[280px] items-center border-r-2 border-[#3d3d3d] bg-[#2c2c2c] pl-[27px]">
      <GreenDot className="h-[28px] w-[28px]" />
      <span className="ml-[17px] font-medium text-white">iOS Dev File</span>
      <span className="ml-[31px]"><XIcon s={20} c="#c8c8c8" /></span>
    </div>
    <div className="flex w-[490px] items-center border-r-2 border-[#3d3d3d] pl-[28px] text-[#b3b3b3]">
      <CodeIcon />
      <span className="ml-[18px] whitespace-nowrap font-medium">Payment Receipts (Create Form)</span>
    </div>
    <div className="flex w-[282px] items-center border-r-2 border-[#3d3d3d] pl-[28px] text-[#b3b3b3]">
      <CodeIcon />
      <span className="ml-[18px] whitespace-nowrap font-medium">Ledgers 2.0</span>
    </div>
    <svg width="24" height="24" viewBox="0 0 24 24" stroke="#b3b3b3" strokeWidth="2" className="ml-[27px] self-center">
      <path d="M12 1v22M1 12h22" />
    </svg>
    <div className="ml-auto flex w-[97px] items-center justify-center gap-[6px] border-l-2 border-[#3d3d3d]">
      <i className="h-[6px] w-[6px] rounded-full bg-[#aaa]" />
      <i className="h-[6px] w-[6px] rounded-full bg-[#aaa]" />
      <i className="h-[6px] w-[6px] rounded-full bg-[#aaa]" />
    </div>
  </div>
);

export default function App() {
  return (
    <div className="flex h-[1800px] w-[2880px] flex-col overflow-hidden bg-[#2c2c2c] [font-family:Inter,sans-serif]">
      <TopBar />
      <div className="flex min-h-0 flex-1">
        <LeftPanel />
        <div className="w-[13px] shrink-0 bg-[#1e1e1e]" />
        <Canvas />
        <RightPanel />
      </div>
    </div>
  );
}
